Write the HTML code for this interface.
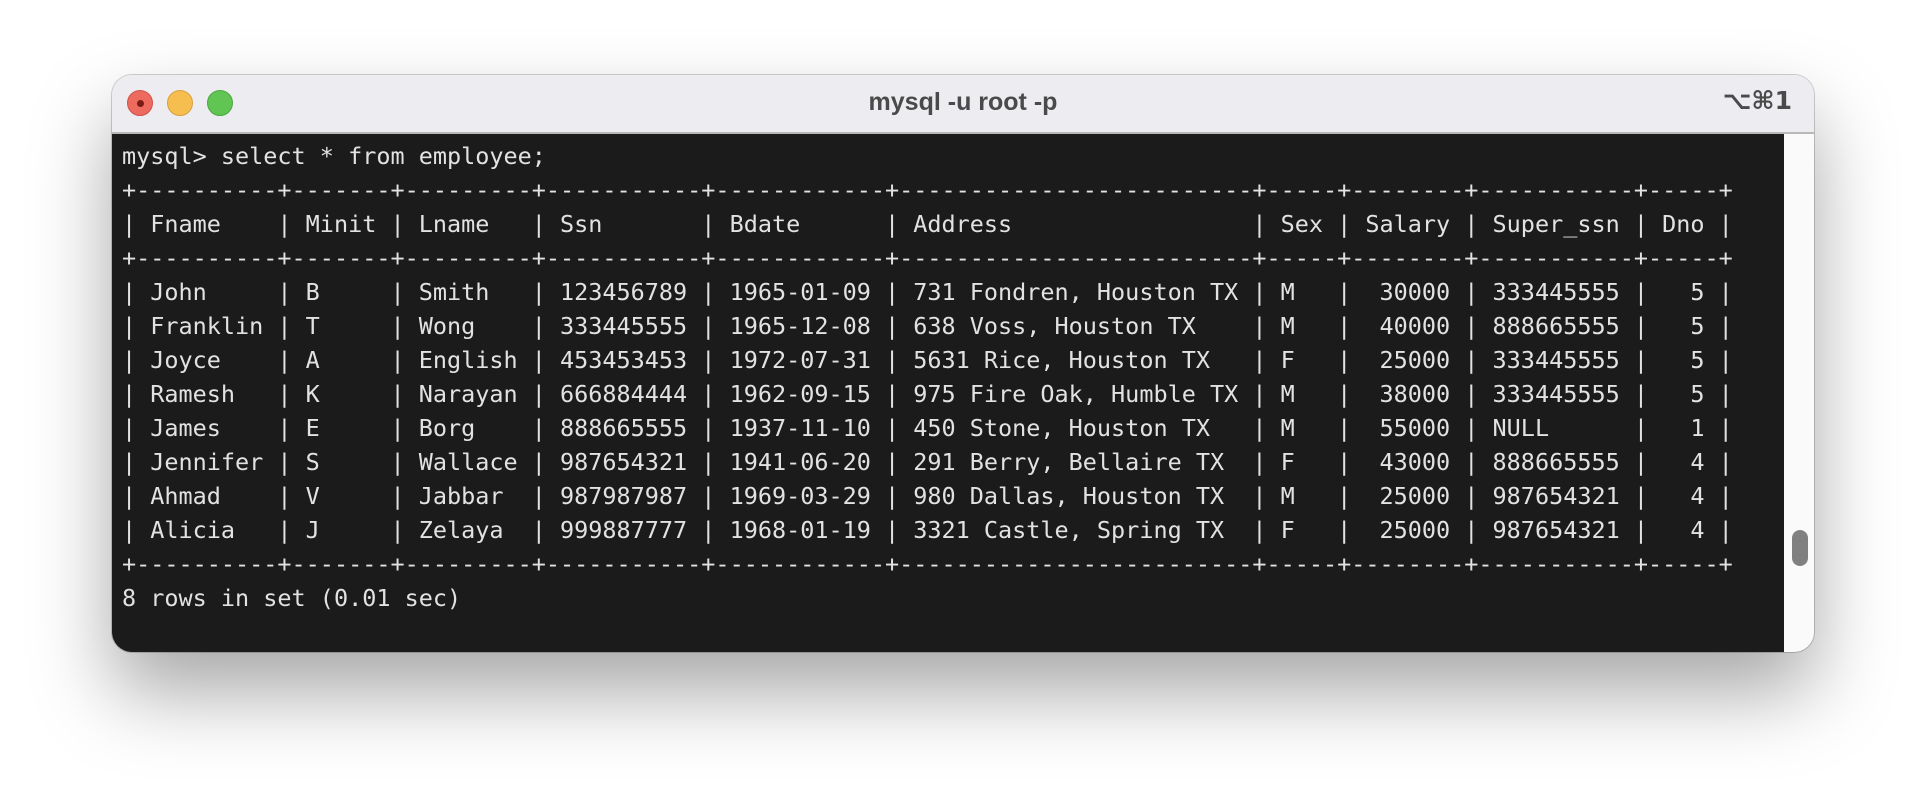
<!DOCTYPE html>
<html><head><meta charset="utf-8"><style>
html,body{margin:0;padding:0;width:1926px;height:800px;background:#fff;overflow:hidden}
.win{position:absolute;left:112px;top:75px;width:1702px;height:577px;border-radius:20px;overflow:hidden;background:#fafafa;box-shadow:0 40px 80px rgba(0,0,0,0.35),0 0 0 1px rgba(0,0,0,0.18)}
.tb{position:absolute;left:0;top:0;width:1702px;height:57px;background:#ececf1;border-bottom:2px solid #b8b8b8}
.dot{position:absolute;top:15px;width:24px;height:24px;border-radius:50%}
.title{position:absolute;left:0;width:1702px;top:13px;text-align:center;font:bold 25px "Liberation Sans",sans-serif;color:#4a4a4a}
.kbd{position:absolute;right:22px;top:11px;font:bold 25px "DejaVu Sans","Liberation Sans",sans-serif;color:#4a4a4a}
.term{position:absolute;left:0;top:59px;width:1672px;height:518px;background:#1b1b1b}
pre{position:absolute;left:10px;top:5px;margin:0;font-family:"DejaVu Sans Mono","Liberation Mono",monospace;font-size:23.47px;line-height:34px;color:#e2e2e2}
.thumb{position:absolute;left:1680px;top:455px;width:16px;height:36px;border-radius:8px;background:#808080}
</style></head><body>
<div class="win">
<div class="tb">
<div class="dot" style="left:15px;background:#ed6a5e;border:1px solid #d0524a"><div style="position:absolute;left:8.5px;top:8.5px;width:7px;height:7px;border-radius:50%;background:#7a1b14"></div></div>
<div class="dot" style="left:55px;background:#f5be4f;border:1px solid #d9a13c"></div>
<div class="dot" style="left:95px;background:#61c554;border:1px solid #4aa83e"></div>
<div class="title">mysql -u root -p</div>
<div class="kbd">⌥⌘1</div>
</div>
<div class="term"><pre>mysql&gt; select * from employee;
+----------+-------+---------+-----------+------------+-------------------------+-----+--------+-----------+-----+
| Fname    | Minit | Lname   | Ssn       | Bdate      | Address                 | Sex | Salary | Super_ssn | Dno |
+----------+-------+---------+-----------+------------+-------------------------+-----+--------+-----------+-----+
| John     | B     | Smith   | 123456789 | 1965-01-09 | 731 Fondren, Houston TX | M   |  30000 | 333445555 |   5 |
| Franklin | T     | Wong    | 333445555 | 1965-12-08 | 638 Voss, Houston TX    | M   |  40000 | 888665555 |   5 |
| Joyce    | A     | English | 453453453 | 1972-07-31 | 5631 Rice, Houston TX   | F   |  25000 | 333445555 |   5 |
| Ramesh   | K     | Narayan | 666884444 | 1962-09-15 | 975 Fire Oak, Humble TX | M   |  38000 | 333445555 |   5 |
| James    | E     | Borg    | 888665555 | 1937-11-10 | 450 Stone, Houston TX   | M   |  55000 | NULL      |   1 |
| Jennifer | S     | Wallace | 987654321 | 1941-06-20 | 291 Berry, Bellaire TX  | F   |  43000 | 888665555 |   4 |
| Ahmad    | V     | Jabbar  | 987987987 | 1969-03-29 | 980 Dallas, Houston TX  | M   |  25000 | 987654321 |   4 |
| Alicia   | J     | Zelaya  | 999887777 | 1968-01-19 | 3321 Castle, Spring TX  | F   |  25000 | 987654321 |   4 |
+----------+-------+---------+-----------+------------+-------------------------+-----+--------+-----------+-----+
8 rows in set (0.01 sec)</pre></div>
<div class="thumb"></div>
</div>
</body></html>
